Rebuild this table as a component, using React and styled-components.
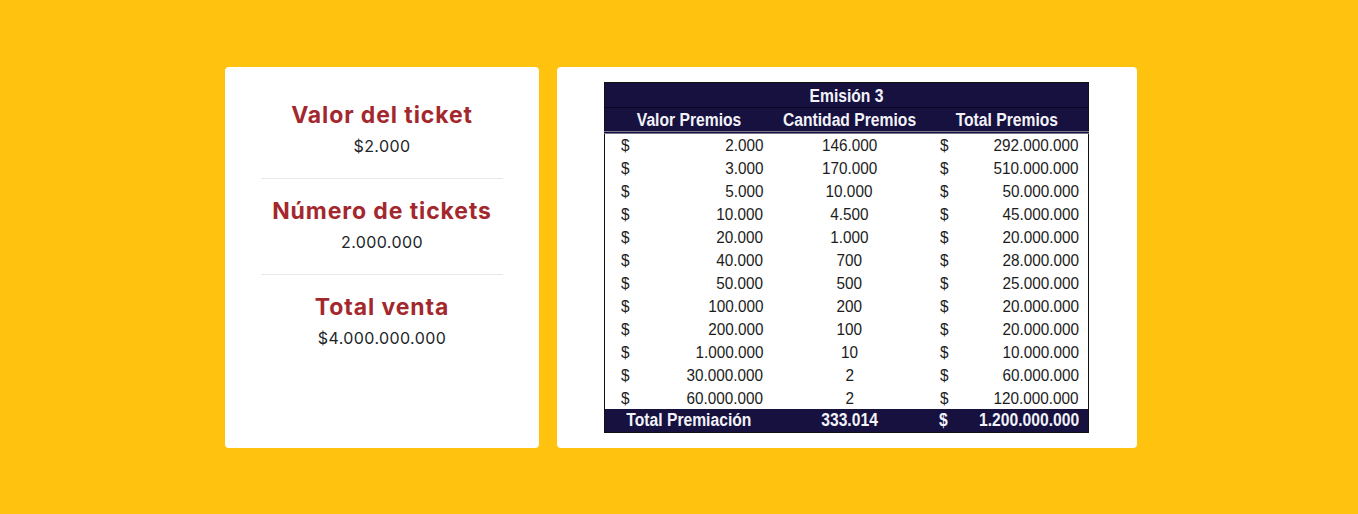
import styled, {createGlobalStyle} from "styled-components"

const GlobalStyle = createGlobalStyle`
  html, body {
    margin: 0;
    padding: 0;
    background: #ffc20e;
  }
  body {
    font-family: "Inter", "Liberation Sans", sans-serif;
  }
`

const Page = styled.div`
  display: flex;
  justify-content: center;
  align-items: stretch;
  gap: 18px;
  padding: 67px 0 66px 4px;
  min-height: 514px;
  box-sizing: border-box;
`

const InfoCard = styled.div`
  width: 314px;
  height: 381px;
  box-sizing: border-box;
  background: #fff;
  border-radius: 4px;
  padding: 16px 36px;
`

const Section = styled.div`
  padding: 17px 0 21px;
  text-align: center;
  border-bottom: ${p => (p.last ? "none" : "1px solid #e8e8e8")};
`

const Title = styled.h3`
  margin: 0;
  font-family: "Inter", sans-serif;
  font-weight: 700;
  font-size: 23px;
  letter-spacing: 0.9px;
  line-height: 30px;
  color: #a3282d;
`

const Value = styled.p`
  margin: 5px 0 0;
  font-family: "Inter", sans-serif;
  font-size: 16px;
  letter-spacing: 0.4px;
  line-height: 22px;
  color: #212529;
`

const TableCard = styled.div`
  width: 580px;
  height: 381px;
  box-sizing: border-box;
  background: #fff;
  border-radius: 4px;
  padding: 15px 0 0 0;
  display: flex;
  justify-content: center;
  align-items: flex-start;
`

const Table = styled.table`
  border-collapse: collapse;
  border: 1px solid #111;
  font-family: "Liberation Sans", Arial, sans-serif;
  color: #1c1c1c;
  width: 484px;
  table-layout: fixed;
  margin-left: -1px;
`

const HeadRow = styled.tr`
  background: #16113f;
  color: #f2f2f8;
  height: ${p => p.h}px;
  border-bottom: ${p => p.line};
`

const HeadCell = styled.th`
  padding: ${p => p.pt || 0}px 0 0;
  font-weight: 700;
  font-size: 18px;
  text-align: center;
  vertical-align: middle;
  white-space: nowrap;
`

// the original is an Excel export: glyphs are condensed, so squeeze them horizontally
const Squeeze = styled.span`
  display: inline-block;
  transform: scaleX(${p => p.k || 0.9});
  transform-origin: ${p => p.origin || "center"};
`

const Row = styled.tr`
  height: 23px;
`

const Cell = styled.td`
  padding: ${p => (p.align === "right" ? "2px 9px 0 0" : p.align === "left" ? `2px 0 0 ${p.pl || 14}px` : "2px 0 0")};
  text-align: ${p => p.align || "center"};
  font-size: 17px;
  line-height: 20px;
  vertical-align: middle;
  white-space: nowrap;
`

const TotalRow = styled.tr`
  background: #16113f;
  color: #f2f2f8;
  height: 23px;
`

const TotalCell = styled.td`
  padding: ${p => (p.align === "right" ? "0 9px 0 0" : p.align === "left" ? "0 0 0 13px" : "0")};
  text-align: ${p => p.align || "center"};
  font-weight: 700;
  font-size: 18px;
  line-height: 20px;
  vertical-align: middle;
  white-space: nowrap;
`

const rows = [
  ["2.000", "146.000", "292.000.000"],
  ["3.000", "170.000", "510.000.000"],
  ["5.000", "10.000", "50.000.000"],
  ["10.000", "4.500", "45.000.000"],
  ["20.000", "1.000", "20.000.000"],
  ["40.000", "700", "28.000.000"],
  ["50.000", "500", "25.000.000"],
  ["100.000", "200", "20.000.000"],
  ["200.000", "100", "20.000.000"],
  ["1.000.000", "10", "10.000.000"],
  ["30.000.000", "2", "60.000.000"],
  ["60.000.000", "2", "120.000.000"],
]

const info = [
  {title: "Valor del ticket", value: "$2.000"},
  {title: "Número de tickets", value: "2.000.000"},
  {title: "Total venta", value: "$4.000.000.000"},
]

export default function App(){
  return(
    <>
      <GlobalStyle />
      <Page>
        <InfoCard>
          {info.map((item, i) => (
            <Section key={item.title} last={i === info.length - 1}>
              <Title>{item.title}</Title>
              <Value>{item.value}</Value>
            </Section>
          ))}
        </InfoCard>
        <TableCard>
          <Table>
            <colgroup>
              <col style={{width: 36}} />
              <col style={{width: 132}} />
              <col style={{width: 154}} />
              <col style={{width: 36}} />
              <col style={{width: 126}} />
            </colgroup>
            <thead>
              <HeadRow h={25} line="1px solid #0a0822">
                <HeadCell colSpan={5} pt={2}><Squeeze k={0.87}>Emisión 3</Squeeze></HeadCell>
              </HeadRow>
              <HeadRow h={25} line="3px double #77778a">
                <HeadCell colSpan={2} pt={1}><Squeeze k={0.87}>Valor Premios</Squeeze></HeadCell>
                <HeadCell pt={1}><Squeeze k={0.87}>Cantidad Premios</Squeeze></HeadCell>
                <HeadCell colSpan={2} pt={1}><Squeeze k={0.87}>Total Premios</Squeeze></HeadCell>
              </HeadRow>
            </thead>
            <tbody>
              {rows.map(r => (
                <Row key={r[0]}>
                  <Cell align="left" pl={16}><Squeeze origin="left">$</Squeeze></Cell>
                  <Cell align="right"><Squeeze origin="right">{r[0]}</Squeeze></Cell>
                  <Cell><Squeeze>{r[1]}</Squeeze></Cell>
                  <Cell align="left"><Squeeze origin="left">$</Squeeze></Cell>
                  <Cell align="right"><Squeeze origin="right">{r[2]}</Squeeze></Cell>
                </Row>
              ))}
              <TotalRow>
                <TotalCell colSpan={2}><Squeeze k={0.87}>Total Premiación</Squeeze></TotalCell>
                <TotalCell><Squeeze k={0.87}>333.014</Squeeze></TotalCell>
                <TotalCell align="left"><Squeeze k={0.87} origin="left">$</Squeeze></TotalCell>
                <TotalCell align="right"><Squeeze k={0.87} origin="right">1.200.000.000</Squeeze></TotalCell>
              </TotalRow>
            </tbody>
          </Table>
        </TableCard>
      </Page>
    </>
  )
}
